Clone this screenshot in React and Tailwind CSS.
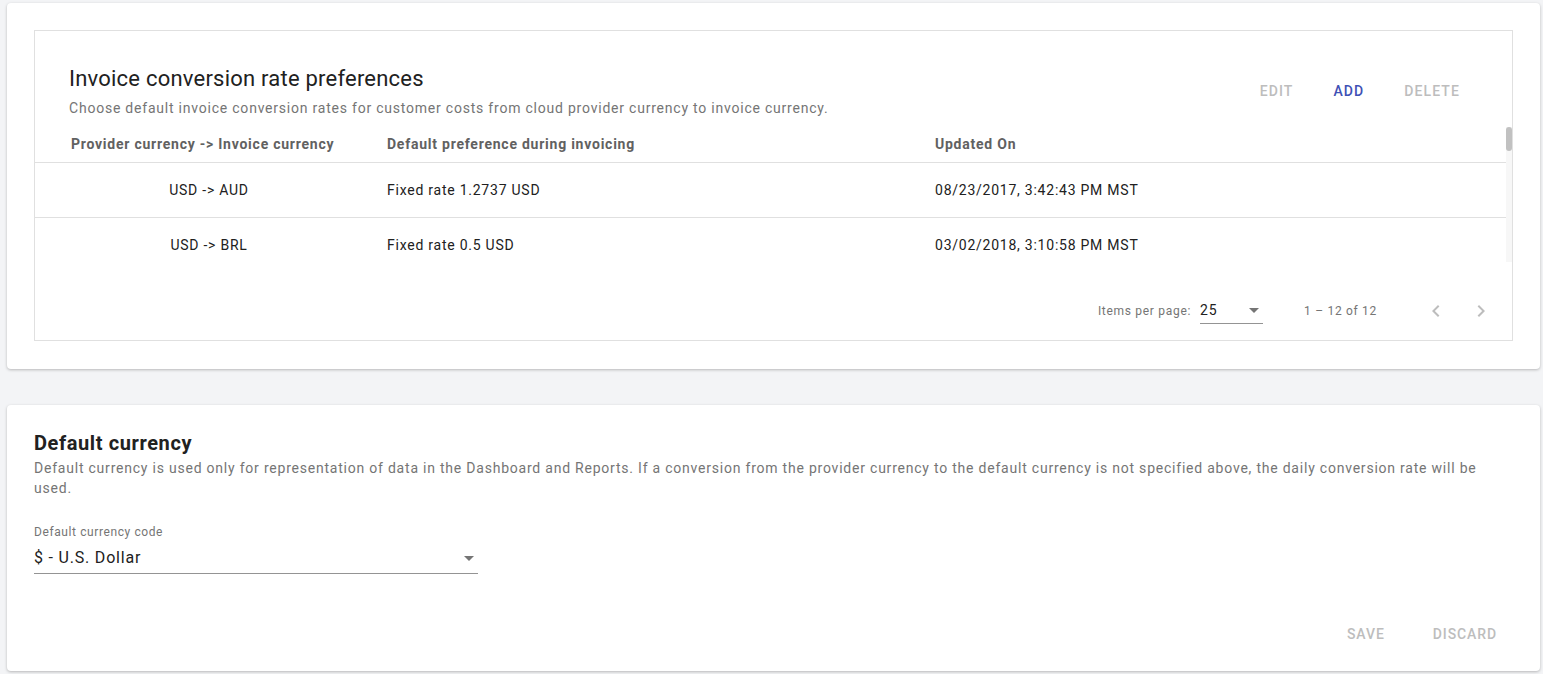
import React from "react";

const rates = [
  { pair: "USD -> AUD", pref: "Fixed rate 1.2737 USD", updated: "08/23/2017, 3:42:43 PM MST" },
  { pair: "USD -> BRL", pref: "Fixed rate 0.5 USD", updated: "03/02/2018, 3:10:58 PM MST" },
];

function Caret() {
  return (
    <svg width="10" height="5" viewBox="0 0 10 5" className="text-[#757575]">
      <path d="M0 0 L5 5 L10 0 Z" fill="currentColor" />
    </svg>
  );
}

function Chevron({ dir }) {
  return (
    <svg width="24" height="24" viewBox="0 0 24 24" className="text-[#bdbdbd]">
      {dir === "left" ? (
        <path d="M15.41 7.41L14 6l-6 6 6 6 1.41-1.41L10.83 12z" fill="currentColor" />
      ) : (
        <path d="M10 6L8.59 7.41 13.17 12l-4.58 4.59L10 18l6-6z" fill="currentColor" />
      )}
    </svg>
  );
}

function RatesCard() {
  return (
    <div className="bg-white rounded shadow-[0_1px_3px_rgba(0,0,0,0.25)] p-[27px] pb-[28px]">
      <div className="border border-[#e0e0e0]">
        {/* Header */}
        <div className="flex justify-between items-start pt-[34px] pl-[34px] pr-[35px]">
          <div>
            <h2 className="text-[22px] leading-[28px] text-[#212121] tracking-[0.22px]">Invoice conversion rate preferences</h2>
            <p className="text-[14px] leading-[20px] text-[#757575] mt-[5px] tracking-[0.78px]">
              Choose default invoice conversion rates for customer costs from cloud provider currency to invoice currency.
            </p>
          </div>
          <div className="flex gap-2 mt-[8px] pr-[1px] text-[14px] font-medium tracking-[1.1px]">
            <button className="px-4 h-9 text-[#bdbdbd]">EDIT</button>
            <button className="px-4 h-9 text-[#3f51b5]">ADD</button>
            <button className="px-4 h-9 text-[#bdbdbd]">DELETE</button>
          </div>
        </div>

        {/* Table */}
        <div className="flex h-[135px] mt-[9px] overflow-hidden tracking-[0.76px]">
          <div className="flex-1">
            <div className="flex h-[36px] items-center border-b border-[#e0e0e0] text-[14px] font-bold text-[#616161]">
              <div className="w-[352px] pl-[36px]">Provider currency -&gt; Invoice currency</div>
              <div className="w-[548px]">Default preference during invoicing</div>
              <div className="flex-1">Updated On</div>
            </div>
            {rates.map((r) => (
              <div key={r.pair} className="flex h-[55px] items-center border-b border-[#e0e0e0] text-[14px] text-[#212121]">
                <div className="w-[352px] pl-[36px] pr-[40px] text-center">{r.pair}</div>
                <div className="w-[548px]">{r.pref}</div>
                <div className="flex-1">{r.updated}</div>
              </div>
            ))}
          </div>
          <div className="w-[6px] bg-[#f7f7f7]">
            <div className="h-[24px] rounded-full bg-[#c1c1c1]"></div>
          </div>
        </div>

        {/* Pagination */}
        <div className="flex justify-end items-center h-[56px] mt-[21px] mb-[1px] pr-[11px] text-[12px] text-[#757575] tracking-[0.7px]">
          <span>Items per page:</span>
          <div className="ml-[9px] w-[63px] flex items-center justify-between border-b border-[#949494] h-[26px] pr-[4px]">
            <span className="text-[14px] text-[#212121]">25</span>
            <Caret />
          </div>
          <span className="ml-[41px]">1 – 12 of 12</span>
          <div className="flex ml-[39px] gap-[5px]">
            <button className="w-10 h-10 flex items-center justify-center"><Chevron dir="left" /></button>
            <button className="w-10 h-10 flex items-center justify-center"><Chevron dir="right" /></button>
          </div>
        </div>
      </div>
    </div>
  );
}

function CurrencyCard() {
  return (
    <div className="bg-white rounded shadow-[0_1px_3px_rgba(0,0,0,0.25)] px-[27px] pt-[26px] pb-[19px]">
      <h2 className="text-[20px] leading-[24px] font-bold text-[#212121] tracking-[0.6px]">Default currency</h2>
      <p className="text-[14px] leading-[20px] text-[#757575] mt-[3px] tracking-[0.78px]">
        Default currency is used only for representation of data in the Dashboard and Reports. If a conversion from the provider currency to the default currency is not specified above, the daily conversion rate will be used.
      </p>
      <div className="mt-[26px] w-[444px]">
        <div className="text-[12px] leading-[16px] text-[#757575] tracking-[0.6px]">Default currency code</div>
        <div className="flex items-center justify-between h-[31px] mt-[3px] border-b border-[#949494] pr-[4px]">
          <span className="text-[16px] text-[#212121] tracking-[0.8px]">$ - U.S. Dollar</span>
          <Caret />
        </div>
      </div>
      <div className="flex justify-end gap-4 mt-[42px] text-[14px] font-medium text-[#bdbdbd] tracking-[0.9px]">
        <button className="px-4 h-9">SAVE</button>
        <button className="px-4 h-9">DISCARD</button>
      </div>
    </div>
  );
}

export default function App() {
  return (
    <div className="min-h-screen bg-[#f3f4f6] pt-[3px] pl-[7px] pr-[3px] pb-[3px] font-['Roboto',sans-serif]">
      <RatesCard />
      <div className="mt-[36px]">
        <CurrencyCard />
      </div>
    </div>
  );
}
